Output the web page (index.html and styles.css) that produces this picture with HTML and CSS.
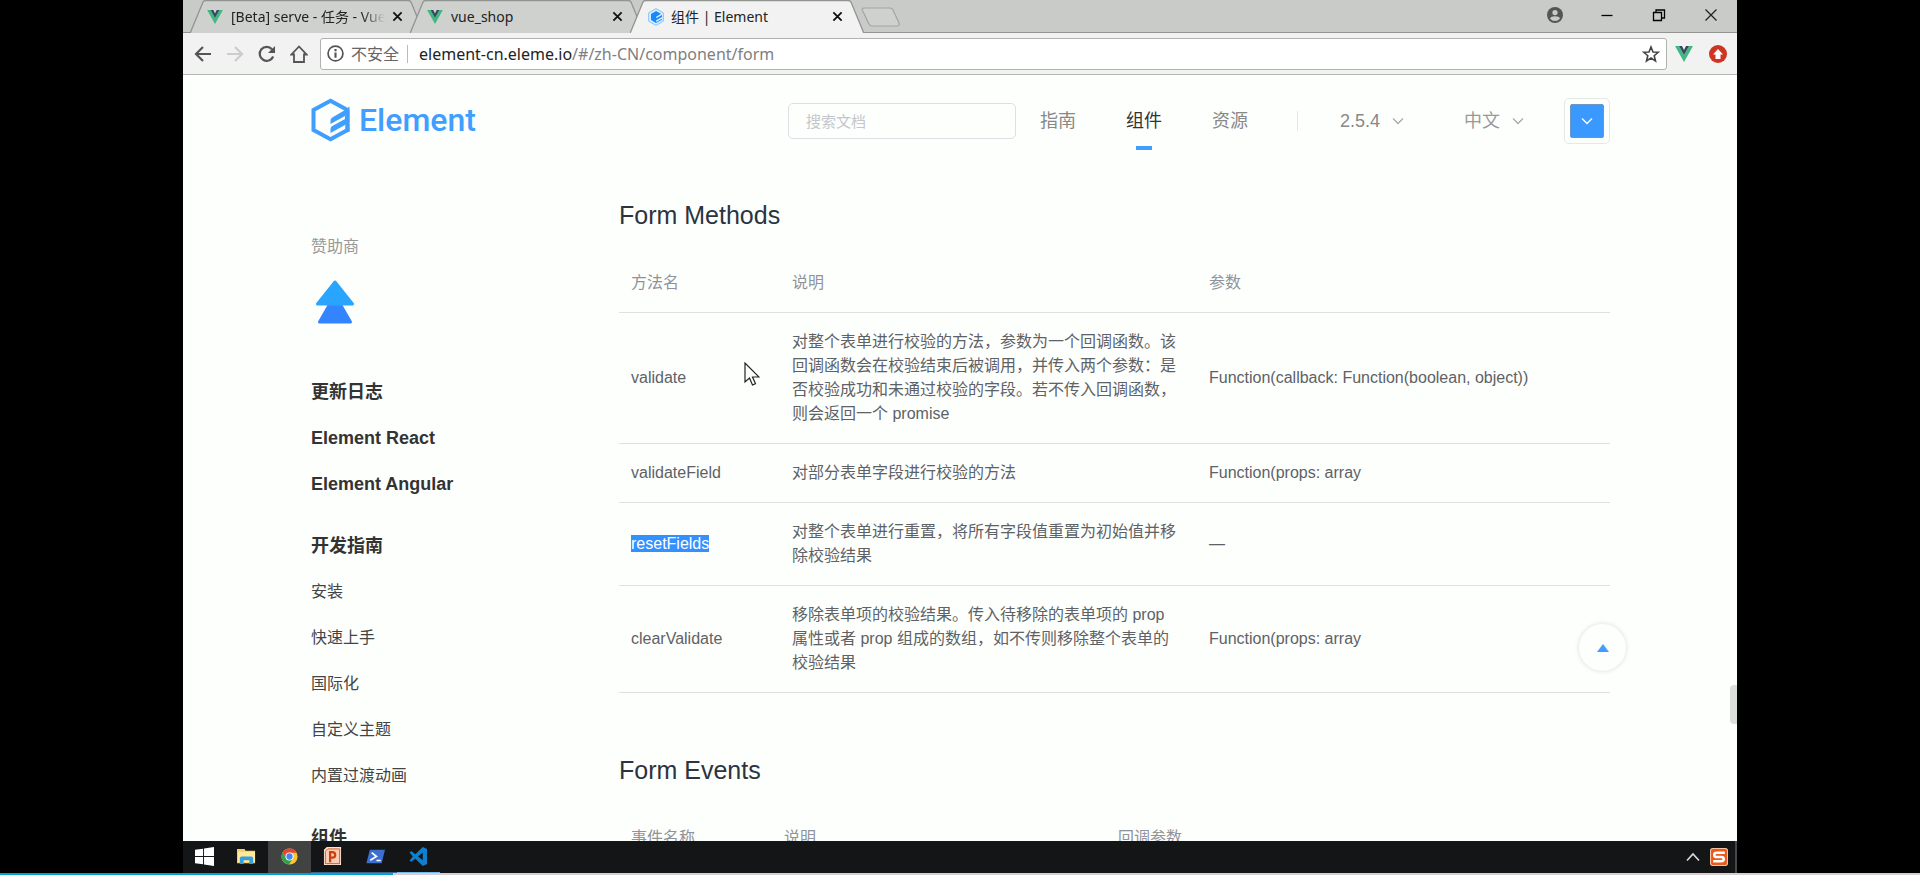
FILE: index.html
```html
<!DOCTYPE html>
<html lang="zh-CN">
<head>
<meta charset="utf-8">
<title>组件 | Element</title>
<link rel="stylesheet" href="styles.css">
</head>
<body>
<svg class="defs" aria-hidden="true">
  <defs>
    <symbol id="vue" viewBox="0 0 18 16">
      <path fill="#41b883" d="M0 0h4l5 9 5-9h4L9 16z"/>
      <path fill="#34495e" d="M4 0h3l2 4 2-4h3L9 9z"/>
    </symbol>
    <symbol id="close" viewBox="0 0 12 12"><path d="M1.500 1.500l9 9m0-9l-9 9" fill="none" stroke="currentColor" stroke-width="2"/></symbol>
    <symbol id="tab-shape" viewBox="0 0 234 32" preserveAspectRatio="none"><path d="M0 32.500L13 2Q14 .5 16 .5H218Q220 .5 221 2L234 32.500" stroke="#929492" stroke-width="1.300"/></symbol>
    <symbol id="chevron" viewBox="0 0 12 8"><path d="M1 1.500l5 5 5-5" fill="none" stroke="currentColor" stroke-width="1.300"/></symbol>
  </defs>
</svg>

<div class="desktop">
  <nav class="tabstrip" aria-label="标签页">
    <div class="tab">
      <svg class="tab-bg"><use href="#tab-shape"/></svg>
      <svg class="favicon"><use href="#vue"/></svg>
      <span class="tab-title fade">[Beta] serve - 任务 - Vue</span>
      <button class="tab-close" aria-label="关闭"><svg><use href="#close"/></svg></button>
    </div>
    <div class="tab">
      <svg class="tab-bg"><use href="#tab-shape"/></svg>
      <svg class="favicon"><use href="#vue"/></svg>
      <span class="tab-title">vue_shop</span>
      <button class="tab-close" aria-label="关闭"><svg><use href="#close"/></svg></button>
    </div>
    <div class="tab active">
      <svg class="tab-bg"><use href="#tab-shape"/></svg>
      <svg class="favicon round" viewBox="0 0 18 18">
        <path d="M9 .6l7.300 4.200v8.400L9 17.400 1.700 13.200V4.800z" fill="#d8edff" stroke="#7fc3ff"/>
        <path d="M9 3l5 2.800-4.800 2.900v1.600L15 7v2l-5.800 3.300v1.600L15 10.700v1L9 15l-5-3V6z" fill="#1989fa"/>
      </svg>
      <span class="tab-title">组件 | Element</span>
      <button class="tab-close" aria-label="关闭"><svg><use href="#close"/></svg></button>
    </div>
    <button class="new-tab" aria-label="新标签页">
      <svg viewBox="0 0 40 20"><path d="M3 1h26q2 0 3 2l6 13q1 3-2 3H11q-2 0-3-2L1.500 3.500Q.5 1 3 1z" fill="#cfd1cf" stroke="#a3a5a3" stroke-width="1.200"/></svg>
    </button>
    <div class="window-buttons">
      <button aria-label="用户"><svg viewBox="0 0 16 16"><circle cx="8" cy="8" r="8" fill="#555"/><circle cx="8" cy="5.600" r="2.600" fill="#c9cbc9"/><path d="M3 11.500Q4 9.300 8 9.300t5 2.200Q11 14 8 14t-5-2.500z" fill="#c9cbc9"/></svg></button>
      <button aria-label="最小化"><svg viewBox="0 0 16 16"><path d="M2.500 8.500h11" stroke="#000" stroke-width="1.300"/></svg></button>
      <button aria-label="还原"><svg viewBox="0 0 16 16"><path d="M2.500 5.500h8v8h-8zM5 5.500V3h8.500v8H11" fill="none" stroke="#000" stroke-width="1.300"/></svg></button>
      <button aria-label="关闭窗口"><svg viewBox="0 0 16 16"><path d="M2.500 2.500l11 11m0-11l-11 11" stroke="#222" stroke-width="1.300"/></svg></button>
    </div>
  </nav>

  <div class="toolbar">
    <button class="tool" aria-label="后退"><svg viewBox="0 0 18 18"><path d="M17 9H2.500M9 2L2 9l7 7" fill="none" stroke="#555" stroke-width="2.200"/></svg></button>
    <button class="tool" aria-label="前进"><svg viewBox="0 0 18 18"><path d="M1 9h14.500M9 2l7 7-7 7" fill="none" stroke="#ccc" stroke-width="2.200"/></svg></button>
    <button class="tool" aria-label="刷新"><svg viewBox="0 0 18 18"><path d="M15.200 11.500A7 7 0 1 1 14 4.200" fill="none" stroke="#555" stroke-width="2.200"/><path d="M17 1v7h-7z" fill="#555"/></svg></button>
    <button class="tool" aria-label="主页"><svg viewBox="0 0 18 18"><path d="M9 1.500L1.500 9.500H4V17h10V9.500h2.500z" fill="none" stroke="#555" stroke-width="1.800"/></svg></button>
    <div class="omnibox">
      <svg class="info" viewBox="0 0 16 16"><circle cx="8" cy="8" r="7" fill="none" stroke="#555" stroke-width="1.600"/><path d="M8 7v5M8 3.800v2" stroke="#555" stroke-width="2"/></svg>
      <span class="insecure">不安全</span>
      <span class="url">element-cn.eleme.io<span class="path">/#/zh-CN/component/form</span></span>
      <svg class="star" viewBox="0 0 18 18"><path d="M9 2l2 5 5.200.3-4 3.400 1.300 5.200L9 13l-4.500 2.900 1.300-5.200-4-3.400L7 7z" fill="none" stroke="#444" stroke-width="1.600"/></svg>
    </div>
    <button class="ext" aria-label="Vue"><svg viewBox="0 0 18 16"><use href="#vue"/></svg></button>
    <button class="ext" aria-label="更新"><svg viewBox="0 0 18 18"><circle cx="9" cy="9" r="9" fill="#cf3322"/><path d="M9 4l5 5.500h-2.500V14h-5V9.500H4z" fill="#fff"/></svg></button>
  </div>

  <div class="page">
    <header class="header">
      <a class="logo" href="#">
        <svg viewBox="0 0 40 44">
          <path d="M36.500 26v6L19.500 41.300 2.500 32V12L19.500 2.700 36.500 12" fill="none" stroke="#409eff" stroke-width="4"/>
          <path d="M38.500 10.500v7L19.500 28v-3.500q0-2 1.800-3L34 14z" fill="#409eff" transform="translate(0 -2)"/>
          <path d="M38.500 16.500v9L19.500 36v-4q0-2 1.800-3L34 22v-3z" fill="#409eff" transform="translate(0 -1)"/>
          <path d="M34.500 12h4v22h-4z" fill="#409eff"/>
        </svg>
        <span>Element</span>
      </a>
      <input class="search" type="text" placeholder="搜索文档" aria-label="搜索文档">
      <nav class="nav">
        <a href="#">指南</a>
        <a href="#" class="current">组件</a>
        <a href="#">资源</a>
      </nav>
      <button class="drop version">2.5.4<svg><use href="#chevron"/></svg></button>
      <button class="drop lang">中文<svg><use href="#chevron"/></svg></button>
      <button class="theme" aria-label="主题色"><span><svg><use href="#chevron"/></svg></span></button>
    </header>

    <div class="columns">
      <aside class="side">
        <p class="sponsor">赞助商</p>
        <svg class="sponsor-logo" viewBox="0 0 40 46">
          <path d="M20 16L35.500 43H4.500z" fill="#3385ff" stroke="#3385ff" stroke-width="3" stroke-linejoin="round"/>
          <path d="M20 3L37.500 25h-35z" fill="#2aa5ff" stroke="#2aa5ff" stroke-width="3" stroke-linejoin="round"/>
        </svg>
        <ul class="group">
          <li><a class="strong" href="#">更新日志</a></li>
          <li><a class="strong" href="#">Element React</a></li>
          <li><a class="strong" href="#">Element Angular</a></li>
        </ul>
        <ul class="group">
          <li><a class="strong" href="#">开发指南</a></li>
          <li><a href="#">安装</a></li>
          <li><a href="#">快速上手</a></li>
          <li><a href="#">国际化</a></li>
          <li><a href="#">自定义主题</a></li>
          <li><a href="#">内置过渡动画</a></li>
        </ul>
        <ul class="group">
          <li><a class="strong" href="#">组件</a></li>
        </ul>
      </aside>

      <main class="content">
        <h3>Form Methods</h3>
        <table class="methods">
          <thead><tr><th>方法名</th><th>说明</th><th>参数</th></tr></thead>
          <tbody>
            <tr><td>validate</td><td>对整个表单进行校验的方法，参数为一个回调函数。该回调函数会在校验结束后被调用，并传入两个参数：是否校验成功和未通过校验的字段。若不传入回调函数，则会返回一个 promise</td><td>Function(callback: Function(boolean, object))</td></tr>
            <tr><td>validateField</td><td>对部分表单字段进行校验的方法</td><td>Function(props: array</td></tr>
            <tr><td><mark>resetFields</mark></td><td>对整个表单进行重置，将所有字段值重置为初始值并移除校验结果</td><td>—</td></tr>
            <tr><td>clearValidate</td><td>移除表单项的校验结果。传入待移除的表单项的 prop 属性或者 prop 组成的数组，如不传则移除整个表单的校验结果</td><td>Function(props: array</td></tr>
          </tbody>
        </table>
        <h3>Form Events</h3>
        <table class="events">
          <thead><tr><th>事件名称</th><th>说明</th><th>回调参数</th></tr></thead>
        </table>
      </main>
    </div>

    <button class="to-top" aria-label="回到顶部"><svg viewBox="0 0 12 8"><path d="M6 0l6 8H0z" fill="#409eff"/></svg></button>
    <div class="scroll-thumb"></div>
    <svg class="pointer" viewBox="0 0 16 24"><path d="M1 1v19l4.500-4 3 7 3-1.300-3-6.700H15z" fill="#fff" stroke="#222" stroke-width="1.200"/></svg>
  </div>

  <footer class="taskbar">
    <button aria-label="开始"><svg viewBox="0 0 20 20"><path fill="#fff" d="M0 3l8.500-1.200v7.700H0zM9.500 1.600L20 0v9.500H9.500zM0 10.500h8.500v7.700L0 17zM9.500 10.500H20V20L9.500 18.400z"/></svg></button>
    <button aria-label="文件资源管理器"><svg viewBox="0 0 20 20"><path fill="#f5cf63" d="M0 2h8l1 2h10v13H0z"/><path fill="#ffe99b" d="M1 5h18v11H1z"/><path fill="#35a0dc" d="M3 18v-6q0-2 2-2h10q2 0 2 2v6h-4v-4H7v4z"/></svg></button>
    <button class="focus" aria-label="Chrome"><svg viewBox="0 0 20 20"><circle cx="10" cy="10" r="8.500" fill="#fbc72e"/><path fill="#e2453a" d="M2.600 5.800A8.500 8.500 0 0 1 17.500 6H10L6.500 12z"/><path fill="#2fa152" d="M2.600 5.800A8.500 8.500 0 0 0 9.500 18.500L13.500 12H6.500z"/><circle cx="10" cy="10" r="4.300" fill="#fff"/><circle cx="10" cy="10" r="3.300" fill="#4a84ee"/></svg></button>
    <button class="open" aria-label="PowerPoint"><svg viewBox="0 0 20 20"><path fill="#fbe3d5" d="M4 0h15v19H1V3z"/><path d="M5 2h12.500v15.500H2.500V4.500z" fill="#f9cdb4" stroke="#d9561f"/><path d="M7.500 16V5.500h2.500a2.800 2.800 0 0 1 0 5.600H7.500" fill="none" stroke="#c8410f" stroke-width="2.400"/></svg></button>
    <button class="open" aria-label="PowerShell"><svg viewBox="0 0 20 20"><path fill="#3b6fd0" d="M4 3h16l-3.500 14H.5z"/><path d="M6 6l5 4-6.500 4M11 14.200h4.500" fill="none" stroke="#fff" stroke-width="1.800"/></svg></button>
    <button class="open bright" aria-label="VS Code"><svg viewBox="0 0 20 20"><path fill="#0f7fd0" fill-rule="evenodd" d="M14.500 0L19 2v16l-4.500 2L6.700 12.300 2.500 15.500.5 14.500 4 10 .5 5.500l2-1 4.200 3.200zM14.500 6L9.500 10l5 4z"/></svg></button>
    <div class="tray">
      <button aria-label="显示隐藏的图标"><svg class="up" viewBox="0 0 14 10"><path d="M1 8.500l6-6.500 6 6.500" fill="none" stroke="#ddd" stroke-width="1.600"/></svg></button>
      <button aria-label="输入法"><svg class="ime" viewBox="0 0 17 17"><rect x=".5" y=".5" width="16" height="16" rx="2" fill="#ea5a1d" stroke="#f6c3a3"/><path d="M14 4.500H6.500Q4 4.500 4 6.500t2.500 2h4q2.500 0 2.500 2t-2.500 2H3" fill="none" stroke="#fff" stroke-width="2.400"/></svg></button>
    </div>
  </footer>
</div>
<div class="progress"><div class="played"></div></div>
</body>
</html>
```

FILE: styles.css
```css
* { box-sizing: border-box; }

html, body { height: 100%; }

body {
  margin: 0;
  display: flex;
  flex-direction: column;
  background: #000;
  color: #5e6266;
  font: 16px/24px "Liberation Sans", "Noto Sans CJK SC", sans-serif;
  overflow: hidden;
}

button {
  padding: 0;
  border: 0;
  background: none;
  font: inherit;
  color: inherit;
  display: flex;
  align-items: center;
  justify-content: center;
}

a { color: inherit; text-decoration: none; }

.defs { position: absolute; width: 0; height: 0; }

.desktop {
  flex: 1;
  min-height: 0;
  margin: 0 183px;
  display: flex;
  flex-direction: column;
  background: #fdfffd;
}

/* Browser tabs */
.tabstrip {
  flex: none;
  display: flex;
  height: 33px;
  padding-left: 7px;
  background: #c9cbc9;
  border-bottom: 1px solid #929492;
  font: 14px/20px "Noto Sans", "Noto Sans CJK SC", sans-serif;
  color: #222;
}

.tab {
  position: relative;
  display: flex;
  align-items: center;
  width: 234px;
  height: 33px;
  margin-right: -14px;
  padding: 0 17px;
}

.tab-bg {
  position: absolute;
  top: 0;
  left: 0;
  width: 100%;
  height: 100%;
  fill: #cfd1cf;
}

.active { z-index: 1; }
.active .tab-bg { fill: #f1f2f1; }

.favicon { position: relative; flex: none; width: 16px; height: 14px; }
.favicon.round { width: 18px; height: 18px; }

.tab-title {
  position: relative;
  flex: 1;
  margin-left: 8px;
  overflow: hidden;
  white-space: nowrap;
}

.favicon.round + .tab-title { margin-left: 6px; }

.fade { mask-image: linear-gradient(to right, #000 85%, transparent); }

.tab-close { position: relative; width: 20px; height: 20px; margin-left: 2px; color: #111; }
.tab-close svg { width: 11px; height: 11px; }

.new-tab { margin-left: 11px; height: 34px; z-index: 1; }
.new-tab svg { width: 40px; height: 20px; }

.window-buttons { display: flex; margin-left: auto; }
.window-buttons button { width: 52px; height: 30px; }
.window-buttons svg { width: 16px; height: 16px; }

/* Address bar */
.toolbar {
  flex: none;
  display: flex;
  align-items: center;
  height: 42px;
  padding: 0 2px 0 4px;
  background: #f1f2f1;
  border-bottom: 1px solid #b4b6b4;
}

.tool { width: 32px; height: 32px; }
.tool svg { width: 18px; height: 18px; }

.omnibox {
  flex: 1;
  display: flex;
  align-items: center;
  height: 32px;
  margin-left: 5px;
  padding: 0 6px;
  border: 1px solid #b0b2b0;
  border-radius: 3px;
  background: #fff;
  font: 16px/24px "Noto Sans", "Noto Sans CJK SC", sans-serif;
  color: #222;
}

.info { width: 17px; height: 17px; }
.insecure { margin-left: 7px; padding-right: 8px; border-right: 1px solid #bbb; line-height: 18px; color: #666; }
.url { flex: 1; margin-left: 11px; }
.path { color: #808080; }
.star { width: 18px; height: 18px; }

.ext { width: 34px; height: 32px; }
.ext svg { width: 18px; height: 18px; }

/* Site */
.page {
  position: relative;
  flex: 1;
  min-height: 0;
  padding: 0 127px 0 128px;
  overflow: hidden;
}

.header {
  display: flex;
  align-items: center;
  height: 92px;
  font-size: 18px;
  color: #888;
}

.logo { display: flex; align-items: center; gap: 8px; padding-bottom: 2px; color: #409eff; font: 500 32px/44px Roboto, sans-serif; }
.logo svg { width: 40px; height: 44px; }

.search {
  width: 228px;
  height: 36px;
  margin-left: auto;
  padding: 0 17px;
  border: 1px solid #dcdfe6;
  border-radius: 5px;
  background: transparent;
  font: 15px/24px "Liberation Sans", "Noto Sans CJK SC", sans-serif;
}

.search::placeholder { color: #c3c6cc; opacity: 1; }

.nav { display: flex; gap: 50px; margin-left: 24px; padding-right: 49px; border-right: 1px solid #e6e8e6; line-height: 20px; }
.nav a { position: relative; }

.current { color: #333; }

.current::after {
  content: "";
  position: absolute;
  top: 35px;
  left: 10px;
  width: 16px;
  height: 4px;
  background: #409eff;
}

.drop { gap: 12px; }
.drop svg { width: 12px; height: 8px; color: #aaa; }
.version { margin-left: 42px; }
.lang { margin-left: 60px; color: #999; }

.theme { width: 46px; height: 46px; margin-left: 40px; border: 1px solid #e6e8e6; border-radius: 5px; }

.theme span {
  display: flex;
  align-items: center;
  justify-content: center;
  width: 34px;
  height: 34px;
  border: 1px solid #6c96c8;
  border-radius: 2px;
  background: #3a99ff;
}

.theme svg { width: 12px; height: 8px; color: #fff; }

.columns { display: flex; }

.side { width: 308px; flex: none; padding-top: 68px; color: #444; }

.sponsor { margin: 0; color: #999; }

.sponsor-logo { display: block; width: 40px; height: 46px; margin: 20px 0 44px 4px; }

.group { margin: 0 0 16px; padding: 0; list-style: none; line-height: 46px; }
.group a { display: block; }
.strong { font-size: 18px; font-weight: 700; color: #333; }

.content { flex: 1; padding-top: 32px; }

h3 { margin: 0; font-size: 25px; line-height: 32px; font-weight: 400; color: #2b3440; }
h3 + table { margin-top: 23px; }
table + h3 { margin-top: 61px; }

table { width: 100%; border-collapse: collapse; table-layout: fixed; }

th, td {
  padding: 17px 12px;
  border-bottom: 1px solid #dfe1e0;
  text-align: left;
  font-weight: 400;
}

th { color: #909399; }
td:nth-child(2) { padding-right: 20px; }

.methods th:nth-child(1) { width: 161px; }
.methods th:nth-child(2) { width: 417px; }
.events th:nth-child(1) { width: 153px; }
.events th:nth-child(2) { width: 334px; }

mark { background: #3390ff; color: #fff; }

.to-top {
  position: absolute;
  right: 111px;
  bottom: 170px;
  width: 47px;
  height: 47px;
  border-radius: 50%;
  background: #fdfffd;
  box-shadow: 0 0 5px rgba(0, 0, 0, .14);
}

.to-top svg { width: 12px; height: 8px; }

.scroll-thumb {
  position: absolute;
  right: 0;
  bottom: 117px;
  width: 7px;
  height: 39px;
  border-radius: 4px 0 0 4px;
  background: #dcdedc;
}

.pointer { position: absolute; left: 561px; top: 287px; width: 16px; height: 24px; }

/* Taskbar */
.taskbar { flex: none; display: flex; height: 32px; background: #131516; }
.taskbar > button { width: 43px; border-bottom: 1px solid transparent; }
.taskbar > button:first-child { width: 42px; }
.taskbar button svg { width: 19px; height: 19px; }
.taskbar > .focus { background: #414342; }
.taskbar > .open { border-bottom-color: #3a6a94; }
.taskbar > .bright { border-bottom-color: #76b9ed; }
.tray { display: flex; gap: 10px; margin-left: auto; padding-right: 7px; border-right: 2px solid #45484a; }
.tray .up { width: 14px; height: 10px; }
.tray .ime { width: 18px; height: 18px; }

.progress { flex: none; height: 2px; background: #d9cdd0; }
.played { width: 393px; height: 2px; background: #00a1d6; }
```
